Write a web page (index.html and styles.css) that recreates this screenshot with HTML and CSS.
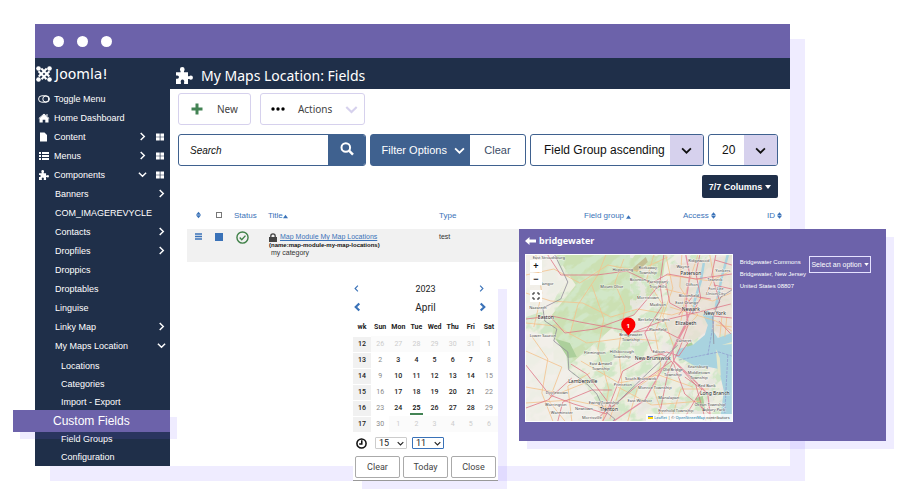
FILE: index.html
```html
<!DOCTYPE html>
<html lang="en">
<head>
<meta charset="utf-8">
<title>My Maps Location: Fields</title>
<link rel="stylesheet" href="styles.css">
</head>
<body>
<svg class="defs" aria-hidden="true">
  <symbol id="right" viewBox="0 0 10 10"><path d="M3 1l4 4-4 4" fill="none" stroke="currentColor" stroke-width="1.6"/></symbol>
  <symbol id="down" viewBox="0 0 10 10"><path d="M1 3l4 4 4-4" fill="none" stroke="currentColor" stroke-width="1.6"/></symbol>
  <symbol id="tiles" viewBox="0 0 9 8"><path d="M0 0h4.2v3.6H0zM5 0h4v3.6H5zM0 4.4h4.2V8H0zM5 4.4h4V8H5z" fill="currentColor"/></symbol>
  <symbol id="puzzle" viewBox="0 0 16 16"><path d="M0 5h4.3V3.900A2.200 2.200 0 0 1 3.700 2.200a2.200 2.200 0 0 1 4.400 0A2.200 2.200 0 0 1 7.500 3.900V5H11.300v3.800h1.200a2 2 0 0 1 1.500-.700 1.900 1.900 0 0 1 0 3.900 2 2 0 0 1-1.500-.700h-1.200V16H7.600v-1.700a1.700 1.700 0 1 0-3 0V16H0v-5h1.300a1.500 1.500 0 0 0 0-3H0z" fill="currentColor"/></symbol>
  <symbol id="sort" viewBox="0 0 6 8"><path d="M3 0l3 3.700H0zM3 8L0 4.300h6z" fill="currentColor"/></symbol>
</svg>
<div class="stage">
  <div class="window">
    <div class="titlebar"><i></i><i></i><i></i></div>
    <div class="app">
      <nav class="sidebar">
        <div class="brand">
          <svg viewBox="0 0 16 16" width="16" height="16"><path d="M2.500 5.300l8 8M5.300 2.500l8 8M13.500 5.300l-8 8M10.700 2.500l-8 8" fill="none" stroke="#fff" stroke-width="2"/><g fill="#fff"><circle cx="2.500" cy="2.500" r="2.300"/><circle cx="13.500" cy="2.500" r="2.300"/><circle cx="2.500" cy="13.500" r="2.300"/><circle cx="13.500" cy="13.500" r="2.300"/></g></svg>
          <span>Joomla!</span>
        </div>
        <ul class="menu">
          <li><a href="#"><svg viewBox="0 0 12 8" width="12" height="8"><g fill="none" stroke="#fff"><rect x=".6" y=".8" width="10.800" height="6.400" rx="3.200"/><circle cx="7.800" cy="4" r="3"/></g></svg>Toggle Menu</a></li>
          <li><a href="#"><svg viewBox="0 0 12 10" width="12" height="10"><path d="M1.500 5.300L6 1.400l4.500 3.900V9.500H7.300V6.700H4.700v2.800H1.500z" fill="#fff"/><path d="M.8 5.500L6 1l5.200 4.500M9 1v2" fill="none" stroke="#fff"/></svg>Home Dashboard</a></li>
          <li><a href="#"><svg viewBox="0 0 12 10" width="12" height="10"><path d="M2 .5h4.500L9 3v6.500H2z" fill="#fff"/></svg>Content</a><svg class="arrow"><use href="#right"/></svg><svg class="tiles"><use href="#tiles"/></svg></li>
          <li><a href="#"><svg viewBox="0 0 12 10" width="12" height="10"><path d="M1 1h2v2H1zM4 1h7v2H4zM1 4h2v2H1zM4 4h7v2H4zM1 7h2v2H1zM4 7h7v2H4z" fill="#fff"/></svg>Menus</a><svg class="arrow"><use href="#right"/></svg><svg class="tiles"><use href="#tiles"/></svg></li>
          <li><a href="#"><svg width="12" height="10"><use href="#puzzle"/></svg>Components</a><svg class="arrow"><use href="#down"/></svg><svg class="tiles"><use href="#tiles"/></svg></li>
        </ul>
        <ul class="menu nested">
          <li><a href="#">Banners</a><svg class="arrow"><use href="#right"/></svg></li>
          <li><a href="#">COM_IMAGEREVYCLE</a></li>
          <li><a href="#">Contacts</a><svg class="arrow"><use href="#right"/></svg></li>
          <li><a href="#">Dropfiles</a><svg class="arrow"><use href="#right"/></svg></li>
          <li><a href="#">Droppics</a></li>
          <li><a href="#">Droptables</a></li>
          <li><a href="#">Linguise</a></li>
          <li><a href="#">Linky Map</a><svg class="arrow"><use href="#right"/></svg></li>
          <li><a href="#">My Maps Location</a><svg class="arrow"><use href="#down"/></svg></li>
        </ul>
        <ul class="menu deep">
          <li><a href="#">Locations</a></li>
          <li><a href="#">Categories</a></li>
          <li><a href="#">Import - Export</a></li>
          <li class="current"><a href="#">Custom Fields</a></li>
          <li><a href="#">Field Groups</a></li>
          <li><a href="#">Configuration</a></li>
        </ul>
      </nav>
      <main>
        <header><svg width="17" height="17"><use href="#puzzle"/></svg><h1>My Maps Location: Fields</h1></header>
        <div class="content">
          <div class="toolbar">
            <button class="tool"><svg viewBox="0 0 12 12" width="12" height="12"><path d="M6 .5v11M.5 6h11" stroke="#438354" stroke-width="3"/></svg>New</button>
            <button class="tool actions"><svg viewBox="0 0 14 4" width="14" height="4"><circle cx="2" cy="2" r="1.700"/><circle cx="7" cy="2" r="1.700"/><circle cx="12" cy="2" r="1.700"/></svg>Actions<svg class="pale" width="13" height="13"><use href="#down"/></svg></button>
          </div>
          <div class="filters">
            <form class="search"><input type="search" placeholder="Search" aria-label="Search"><button type="button" aria-label="Run search"><svg viewBox="0 0 14 14" width="14" height="14"><circle cx="5.800" cy="5.500" r="4.300" fill="none" stroke="#fff" stroke-width="2"/><path d="M9 8.700l4 4" stroke="#fff" stroke-width="2.400"/></svg></button></form>
            <div class="pair"><button class="options">Filter Options<svg width="11" height="11"><use href="#down"/></svg></button><button class="clear">Clear</button></div>
            <label class="pick order"><select aria-label="Sort by"><option>Field Group ascending</option></select><svg width="11" height="11"><use href="#down"/></svg></label>
            <label class="pick limit"><select aria-label="Items per page"><option>20</option></select><svg width="11" height="11"><use href="#down"/></svg></label>
          </div>
          <button class="columns">7/7 Columns<svg viewBox="0 0 6 4" width="6" height="4"><path d="M0 0h6L3 4z" fill="#fff"/></svg></button>
          <table class="fields">
            <colgroup><col class="c-sort"><col class="c-check"><col class="c-status"><col class="c-title"><col class="c-type"><col class="c-group"><col class="c-access"><col></colgroup>
            <thead><tr>
              <th class="mid"><svg width="5" height="8"><use href="#sort"/></svg></th>
              <th class="mid"><input type="checkbox" aria-label="Select all"></th>
              <th class="status">Status</th>
              <th>Title<svg viewBox="0 0 6 4" width="5" height="5"><path d="M3 0l3 4H0z" fill="currentColor"/></svg></th>
              <th>Type</th>
              <th>Field group <svg viewBox="0 0 6 4" width="5" height="4"><path d="M3 0l3 4H0z" fill="currentColor"/></svg></th>
              <th>Access <svg width="5" height="7"><use href="#sort"/></svg></th>
              <th>ID <svg width="5" height="7"><use href="#sort"/></svg></th>
            </tr></thead>
            <tbody><tr>
              <td class="mid grip"><svg viewBox="0 0 7 7" width="7" height="7"><path d="M0 1h7M0 3.500h7M0 6h7" stroke="#3a72b8" stroke-width="1.400"/></svg></td>
              <td class="mid grip"><input type="checkbox" aria-label="Select row" checked></td>
              <td class="state"><svg viewBox="0 0 14 14" width="13" height="13"><g fill="none" stroke="#3f8047" stroke-width="1.500"><circle cx="7" cy="7" r="6"/><path d="M4 7l2.200 2.300L10.200 5"/></g></svg></td>
              <td><div class="entry"><svg viewBox="0 0 8 9" width="8" height="9"><path d="M0 4h8v5H0z" fill="#444"/><path d="M1.800 4V3a2.200 2.200 0 0 1 4.400 0v1" fill="none" stroke="#444" stroke-width="1.300"/></svg><a href="#">Map Module My Map Locations</a></div><b>(name:map-module-my-map-locations)</b><small>my category</small></td>
              <td class="kind">test</td><td></td><td></td><td></td>
            </tr></tbody>
          </table>
        </div>
      </main>
    </div>
  </div>

  <section class="calendar" aria-label="Date picker">
    <div class="step year"><button aria-label="Previous year"><svg width="7" height="7"><use href="#right"/></svg></button><span>2023</span><button aria-label="Next year"><svg width="7" height="7"><use href="#right"/></svg></button></div>
    <div class="step month"><button aria-label="Previous month"><svg viewBox="0 0 10 10" width="9" height="10"><path d="M3 1l4 4-4 4" fill="none" stroke="currentColor" stroke-width="2.400"/></svg></button><span>April</span><button aria-label="Next month"><svg viewBox="0 0 10 10" width="9" height="10"><path d="M3 1l4 4-4 4" fill="none" stroke="currentColor" stroke-width="2.400"/></svg></button></div>
    <table>
      <thead><tr><th>wk</th><th>Sun</th><th>Mon</th><th>Tue</th><th>Wed</th><th>Thu</th><th>Fri</th><th>Sat</th></tr></thead>
      <tbody>
        <tr><th>12</th><td class="out">26</td><td class="out">27</td><td class="out">28</td><td class="out">29</td><td class="out">30</td><td class="out">31</td><td>1</td></tr>
        <tr><th>13</th><td>2</td><td>3</td><td>4</td><td>5</td><td>6</td><td>7</td><td>8</td></tr>
        <tr><th>14</th><td>9</td><td>10</td><td>11</td><td>12</td><td>13</td><td>14</td><td>15</td></tr>
        <tr><th>15</th><td>16</td><td>17</td><td>18</td><td>19</td><td>20</td><td>21</td><td>22</td></tr>
        <tr><th>16</th><td>23</td><td>24</td><td><span class="today">25</span></td><td>26</td><td>27</td><td>28</td><td>29</td></tr>
        <tr><th>17</th><td>30</td><td class="out">1</td><td class="out">2</td><td class="out">3</td><td class="out">4</td><td class="out">5</td><td class="out">6</td></tr>
      </tbody>
    </table>
    <div class="time">
      <svg viewBox="0 0 12 12" width="11" height="11"><g fill="none" stroke="#111" stroke-width="1.700"><circle cx="6" cy="6" r="5"/><path d="M6.300 2.500v4H3.500"/></g></svg>
      <label class="clock"><select aria-label="Hour"><option>15</option></select><svg width="7" height="7"><use href="#down"/></svg></label>
      <label class="clock active"><select aria-label="Minute"><option>11</option></select><svg width="7" height="7"><use href="#down"/></svg></label>
    </div>
    <div class="choices"><button>Clear</button><button>Today</button><button>Close</button></div>
  </section>

  <section class="place">
    <h2><svg viewBox="0 0 11 8" width="11" height="8"><path d="M0 4l4.500-4v2.500H11v3H4.500V8z" fill="#fff"/></svg>bridgewater</h2>
    <div class="detail">
      <div class="map">
        <svg class="tilesheet" viewBox="0 0 206 166" preserveAspectRatio="xMidYMid slice">
          <defs>
            <filter id="woods" x="0" y="0" width="100%" height="100%"><feTurbulence type="fractalNoise" baseFrequency=".06 .1" numOctaves="4" seed="8"/><feColorMatrix values="0 0 0 0 .64  0 0 0 0 .8  0 0 0 0 .57  7 0 0 0 -3.100"/></filter>
            <filter id="towns" x="0" y="0" width="100%" height="100%"><feTurbulence type="fractalNoise" baseFrequency=".09" numOctaves="4" seed="21"/><feColorMatrix values="0 0 0 0 .85  0 0 0 0 .81  0 0 0 0 .79  0 8 0 0 -4"/></filter>
          </defs>
          <path fill="#edeee0" d="M0 0h206v166H0z"/>
          <path fill="#cbe0b3" d="M30 0h110l-4 30-26 22-34 30-30 26H28L26 60 50 30z"/>
          <g transform="rotate(-35 100 60)"><path filter="url(#woods)" d="M-60-80h340v300H-60z"/></g>
          <path filter="url(#towns)" opacity=".8" d="M105 0h101v166h-70z"/>
          <path fill="#f2eeea" d="M0 0h29l12 26-10 14-7 14-24 8zM0 76l26 5 14 14 2 20 16 13 15 22 5 16H0z" opacity=".85"/>
          <path fill="#eadfd6" opacity=".75" d="M145 10l61-10v84l-22-10-30 22-14-20zM70 146l20 0 6 16-20 4z"/>
          <g fill="#accf9b"><path d="M160 90l6-3 2 6-5 3zM170 143l7-2 2 12-8-4zM30 84l14 4 7 14-9 1z"/></g>
          <path fill="#c3bd92" d="M106 14l14-12 2 5-11 10z"/>
          <path fill="#a9d3df" d="M149 101l4-7 14-4 12-10 3-10-5-10 5-5 6 7-2 12 6 9 14-5v88h-12l4-30-5-22-10-2-14-1-12-7z"/>
          <path fill="none" stroke="#a9d3df" stroke-width="2.500" d="M202 0l-6 22-6 30M178 8l-3 18-6 19-2 14"/>
          <path fill="#e3e7ca" d="M190 94l4 9 1 18-3-4zM196 90l10-3v2z"/>
          <g fill="none" stroke="#f4c28b" stroke-width=".8">
            <path d="M0 20l28-6 26 14 28-18 30 6 30-14M0 38l25 8 32 2 28 14 27-8 34 6 26-8M10 0l6 38-8 34M44 80l8-30 20-30 8-20M0 68l30 3 31 17 38-5 34 3M66 30l12 34-6 30 11 40-6 32M98 4l-9 24 10 24-6 42 3 34-12 36M128 0l-7 24 17 28-9 26 6 32-7 25 11 31M5 80l17 24-6 34 11 28M0 96l36 16-13 34 16 20M46 166l-4-35 22-13M0 132l34 6 30-12M0 148l45-3 38 8M55 106l38 22 40-8 34 12M92 132l34 18 50-4M102 166l10-34 28-20M145 166l10-32 28 0M140 0l7 33-10 28 11 31M156 0l-2 32 18 28-20 22M172 0l-11 34-6 32M140 20l45 6 20-10M139 34l48 12 18-8M144 52l46 14 16 10M184 0l4 22-8 18M196 62l-2 20M201 62l-2 20M190 70l16 2"/>
          </g>
          <g fill="none" stroke="#de7182" stroke-width=".9" opacity=".85">
            <path d="M22 0l13 20 36 0 30-4 25 12 16-9 28 5 36-5M0 64l26-3 28 6 54 10 31-12 30-7 36-9M108 77l27-3 27 14-9 13-12-4-22 7-22 12-14 36-11 12M25 62l14 16 30-4 39-14 22-26 12-9M138 0l-4 28 3 22-18 28 7 18 14 5 8 8 11 30 25 20M140 28l4 20 17 9 1 14-8 22-12 25-7 35-4 13M77 166l8-15-24-32-16-10M84 154l28-24 34-24M0 110l24 30 24 9 33 10M0 153l22-8 24-22M32 166l5-19 29-12 20 0M148 106l22 24 10 36M158 164l18-30-17-12M174 0l-4 18 5 25-9 16M190 0l-4 20 8 27-6 8M153 60l14-19 18 3M189 5l17 5M188 30l18 4M188 61l18 2M193 66l12 13"/>
          </g>
          <g fill="none" stroke="#e592a1" stroke-width="1.300"><path d="M160 0l4 20-4 28 2 19-16 30-27 48-31 21M166 53l-7 17-12 24 1 12 15 14 19 19 3 27"/></g>
          <path fill="none" stroke="#8c8795" stroke-width="1" opacity=".75" d="M29 0l13 27-7 17-18 9 2 13 12 8-3 12 14 11 1 18 18 14 10 10 8 17 10 8-12 12M206 35l-11 7-8 20 1 27M152 90l-30 28-28 27-12 10"/>
          <path fill="none" stroke="#8990cb" stroke-width=".6" stroke-dasharray="3 1" d="M153 105l30-6 10-2 13 4M188 66l-6 34M202 100l-3 58"/>
          <g class="towns">
            <text x="23" y="4">East Stroudsburg</text><text x="97" y="16">Hopatcong</text><text x="122" y="14">Rockaway</text><text x="122" y="19">Township</text><text x="157" y="13">Wayne</text><text x="173" y="7">Ridgewood</text><text class="lg" x="165" y="20">Paterson</text><text x="197" y="17">Yonkers</text><text x="21" y="30">Bangor</text><text x="112" y="26">Boonton</text><text x="132" y="28">Parsippany</text><text x="132" y="33">Troy Hills</text><text x="86" y="33">Mount Olive</text><text x="166" y="31">Clifton</text><text x="189" y="26">Teaneck</text><text x="190" y="35">Fort Lee</text><text x="190" y="40">Union City</text><text x="122" y="44">Morristown</text><text x="132" y="51">Madison</text><text x="163" y="42">Bloomfield</text><text x="161" y="49">East Orange</text><text class="lg" x="165" y="56">Newark</text><text class="lg" x="189" y="60">New York</text><text x="12" y="54">Nazareth</text><text class="lg" x="20" y="64">Easton</text><text class="lg" x="160" y="70">Elizabeth</text><text x="128" y="66">Berkeley Heights</text><text x="132" y="76">Plainfield</text><text x="105" y="81">Bridgewater</text><text x="105" y="86">Township</text><text x="17" y="82">Lower Saucon</text><text x="158" y="87">Carteret</text><text x="69" y="99">Flemington</text><text x="96" y="98">Hillsborough</text><text x="96" y="103">Township</text><text x="133" y="98">Edison</text><text class="lg" x="127" y="105">New Brunswick</text><text x="75" y="110">East Amwell</text><text x="75" y="115">Township</text><text x="147" y="116">Old Bridge</text><text x="147" y="121">Township</text><text class="lg" x="57" y="128">Lambertville</text><text x="97" y="131">Princeton</text><text x="115" y="125">South Brunswick</text><text x="129" y="134">Monroe Township</text><text x="31" y="139">Doylestown</text><text x="172" y="113">Keansburg</text><text x="173" y="119">Middletown</text><text x="173" y="124">Township</text><text x="181" y="132">Red Bank</text><text class="lg" x="189" y="140">Long Branch</text><text x="143" y="144">Manalapan</text><text x="114" y="147">East Windsor</text><text x="78" y="149">Ewing Township</text><text x="30" y="151">Warrington</text><text x="58" y="155">Newtown</text><text class="lg" x="83" y="156">Trenton</text><text x="36" y="159">Warminster</text><text x="184" y="151">Ocean Township</text><text x="188" y="156">Asbury Park</text><text x="150" y="157">Freehold Township</text><text x="66" y="164">Morrisville</text>
          </g>
          <path d="M102.500 80.500l-5.200-6a7.100 7.100 0 1 1 10.400 0z" fill="#fb0000"/>
          <text class="pin" x="102.500" y="73">1</text>
        </svg>
        <div class="zoomer"><button aria-label="Zoom in">+</button><button aria-label="Zoom out">−</button><button class="full" aria-label="Full screen"><svg viewBox="0 0 8 8" width="8" height="8"><path d="M1 3V1h2M5 1h2v2M7 5v2H5M3 7H1V5" fill="none" stroke="#222"/></svg></button></div>
        <div class="credit"><i></i><a href="#">Leaflet</a> | © <a href="#">OpenStreetMap</a> contributors</div>
      </div>
      <address>Bridgewater Commons<br>Bridgewater, New Jersey<br>United States 08807</address>
      <button class="option">Select an option<svg viewBox="0 0 6 4" width="5" height="3"><path d="M0 0h6L3 4z" fill="#fff"/></svg></button>
    </div>
  </section>
</div>
</body>
</html>
```
FILE: styles.css
```css
:root {
  --navy: #1f2f49;
  --purple: #6c62aa;
  --blue: #3f618f;
  --lilac: #d6d1ed;
  --shade: rgba(122, 97, 255, .12);
}
* { box-sizing: border-box; }
body { margin: 0; background: #fff; font-family: "Liberation Sans", sans-serif; font-size: 9px; color: #222; }
button, select, input { margin: 0; padding: 0; border: 0; background: none; font: inherit; color: inherit; }
select { appearance: none; }
a { color: inherit; text-decoration: none; }
svg { flex: none; }
.defs { position: absolute; width: 0; height: 0; }

.stage { position: relative; padding: 24px 130px 34px 35px; }
.window { background: #fff; box-shadow: 15px 15px 0 var(--shade); }
.titlebar { display: flex; align-items: center; gap: 13px; height: 34px; padding-left: 18px; background: var(--purple); }
.titlebar i { width: 11px; height: 11px; border-radius: 50%; background: #fff; }
.app { display: flex; }

.sidebar { width: 135px; flex: none; background: var(--navy); color: #fff; }
.brand { display: flex; align-items: center; gap: 3px; height: 31px; padding-left: 1px; font: 400 14px "DejaVu Sans", sans-serif; }
.menu { margin: 0; padding: 0; list-style: none; }
.menu li { display: flex; align-items: center; height: 19px; padding: 0 6px 0 3px; }
.menu a { display: flex; align-items: center; gap: 4px; flex: 1; white-space: nowrap; }
.arrow { width: 9px; height: 9px; }
.tiles { width: 8px; height: 8px; margin-left: 9px; }
.nested li { padding: 0 4px 0 20px; }
.deep { padding-top: 2px; }
.deep li { height: 18px; padding-left: 26px; }
.deep .current { position: relative; height: 22px; margin: -1px 0 -2px -22px; padding-left: 40px; background: var(--purple); box-shadow: 7px 7px 0 var(--shade); font-size: 12px; }

main { flex: 1; min-width: 0; }
header { display: flex; align-items: center; gap: 8px; height: 31px; padding: 3px 0 0 6px; background: var(--navy); color: #fff; }
h1 { margin: 0; font: 400 14px "Noto Sans", sans-serif; }
.content { padding: 4px 0 0 8px; }
.toolbar { display: flex; gap: 9px; }
.tool { display: flex; align-items: center; gap: 14px; height: 32px; padding: 0 12px; border: 1px solid var(--lilac); border-radius: 3px; font: 400 10px "Noto Sans", sans-serif; color: #444; }
.actions { padding: 0 6px 0 10px; gap: 13px; }
.pale { color: var(--lilac); }
.filters { display: flex; gap: 4px; margin: 9px 12px 0 0; height: 32px; }
.search { display: flex; flex: 1; min-width: 0; border: 1px solid var(--blue); border-radius: 3px; overflow: hidden; }
.search input { flex: 1; min-width: 0; padding-left: 11px; font-size: 10px; font-style: italic; outline: 0; }
.search input::placeholder { color: #111; }
.search button { width: 37px; background: var(--blue); }
.pair { display: flex; width: 156px; border: 1px solid var(--blue); border-radius: 3px; font-size: 11px; }
.options { display: flex; align-items: center; justify-content: flex-end; gap: 7px; width: 99px; padding-right: 5px; background: var(--blue); color: #fff; white-space: nowrap; }
.clear { flex: 1; color: #3b4c66; }
.pick { position: relative; display: flex; border: 1px solid var(--blue); border-radius: 3px; overflow: hidden; font-size: 12px; color: #111; }
.pick select { width: 100%; padding-left: 13px; background: linear-gradient(var(--lilac), var(--lilac)) right / 33px 100% no-repeat; }
.pick svg { position: absolute; right: 11px; top: 10px; pointer-events: none; }
.order { width: 174px; }
.limit { width: 70px; }
.columns { display: flex; align-items: center; justify-content: center; gap: 3px; width: 76px; height: 23px; margin: 9px 12px 0 auto; border-radius: 2px; background: var(--navy); color: #fff; font-size: 9px; font-weight: 700; white-space: nowrap; }

.fields { width: calc(100% - 9px); margin: 8px 0 0 9px; table-layout: fixed; border-collapse: collapse; font-size: 8px; }
.fields th { height: 23px; padding: 5px 0 0; vertical-align: top; text-align: left; font-weight: 400; line-height: 10px; color: #3a72b8; white-space: nowrap; }
.fields th svg { vertical-align: -1px; }
.fields td { height: 33px; padding: 3px 0; vertical-align: top; background: #f1f1f1; color: #333; line-height: 8px; }
.fields .mid { text-align: center; }
.fields .grip { padding-top: 4px; }
.fields .status { padding-left: 5px; }
.fields .state { padding: 2px 0 0 7px; }
.fields .kind { padding-top: 4px; font-size: 7px; }
.fields input { appearance: none; width: 6px; height: 6px; border: 1px solid #777; }
.fields input:checked { width: 8px; height: 8px; border-color: #3a72b8; background: #3a72b8; }
.c-sort { width: 22px; }
.c-check { width: 20px; }
.c-status { width: 39px; }
.c-title { width: 171px; }
.c-type { width: 145px; }
.c-group { width: 99px; }
.c-access { width: 84px; }
.entry { display: flex; align-items: center; gap: 3px; height: 10px; padding-left: 1px; font-size: 7px; }
.entry a { color: #3a72b8; text-decoration: underline; }
.fields b { display: block; margin-left: 1px; font-size: 6px; line-height: 6px; color: #111; }
.fields small { display: block; margin-left: 3px; font-size: 7px; line-height: 10px; }

.calendar { position: absolute; left: 353px; top: 281px; width: 145px; background: #fff; border-bottom: 1px solid #999; box-shadow: 9px 8px 0 var(--shade); font-family: Roboto, sans-serif; }
.step { display: grid; grid-template-columns: 20px 1fr 10px; align-items: center; padding-right: 10px; text-align: center; color: #222; }
.step svg { display: block; color: #3a72b8; }
.step button:first-child svg { transform: scaleX(-1); }
.year { height: 15px; font-size: 9px; }
.month { height: 22px; font-size: 10px; }
.calendar table { width: 100%; border-collapse: collapse; table-layout: fixed; font-size: 7px; line-height: 10px; text-align: center; }
.calendar th, .calendar td { padding: 3px 0; }
.calendar thead th { padding: 4px 0; }
.calendar tbody th { background: #f1f1f1; box-shadow: inset 0 1px #fff; font-weight: 500; }
.calendar td { color: #222; font-weight: 500; }
.calendar td:nth-child(2), .calendar td:last-child { color: #888; font-weight: 400; }
.calendar tbody .out { background: #fbfbfb; color: #ccc; font-weight: 400; }
.today { display: block; width: 13px; margin: 0 auto -2px; border-bottom: 2px solid #438354; font-weight: 700; }
.time { display: flex; align-items: center; gap: 5px; height: 22px; padding-left: 3px; }
.time > svg { margin-right: 3px; }
.clock { position: relative; display: flex; width: 32px; height: 12px; border: 1px solid #ccc; border-radius: 1px; font-size: 9px; }
.clock.active { border-color: #3a72b8; }
.clock select { width: 100%; padding-left: 3px; }
.clock svg { position: absolute; right: 2px; top: 2px; pointer-events: none; }
.choices { display: flex; gap: 3px; padding: 2px; }
.choices button { flex: 1; height: 22px; border: 1px solid #aaa; border-radius: 2px; font-size: 9px; color: #444; }

.place { position: absolute; right: 34px; top: 229px; width: 367px; height: 212px; padding: 0 15px 0 6px; background: var(--purple); box-shadow: 8px 8px 0 var(--shade); color: #fff; }
.place h2 { display: flex; align-items: center; gap: 3px; height: 23px; margin: 0 0 2px; font: 700 9px/23px "Noto Sans", sans-serif; }
.detail { display: flex; align-items: flex-start; }
.map { position: relative; flex: 1; height: 168px; border: 1px solid #fff; background: #fff; }
.tilesheet { display: block; width: 100%; height: 100%; }
.towns { font: 4px "Noto Sans", sans-serif; fill: #444; text-anchor: middle; stroke: rgba(255, 255, 255, .6); stroke-width: 1px; paint-order: stroke; }
.towns .lg { font-size: 5px; fill: #222; }
.pin { font: 700 6px "Noto Sans", sans-serif; fill: #fff; text-anchor: middle; }
.zoomer { position: absolute; left: 4px; top: 5px; display: grid; gap: 1px; }
.zoomer button { display: grid; place-items: center; width: 12px; height: 12px; background: #fff; color: #111; font: 700 9px/12px "Liberation Sans", sans-serif; }
.zoomer .full { margin-top: 4px; }
.credit { position: absolute; right: 0; bottom: 0; display: flex; align-items: center; gap: 1px; height: 7px; padding: 0 2px; background: rgba(255, 255, 255, .8); color: #333; font: 4px/7px "Noto Sans", sans-serif; white-space: nowrap; }
.credit a { color: #0b76a8; }
.credit i { width: 5px; height: 3px; background: linear-gradient(#4c7be1 50%, #ffd500 50%); }
address { margin: 2px 3px 0 7px; font: 6px/12px "Liberation Sans", sans-serif; white-space: nowrap; }
.option { display: flex; align-items: center; justify-content: center; gap: 2px; width: 62px; height: 17px; margin-top: 2px; border: 1px solid #e6e2ff; font-size: 7px; white-space: nowrap; }
```
